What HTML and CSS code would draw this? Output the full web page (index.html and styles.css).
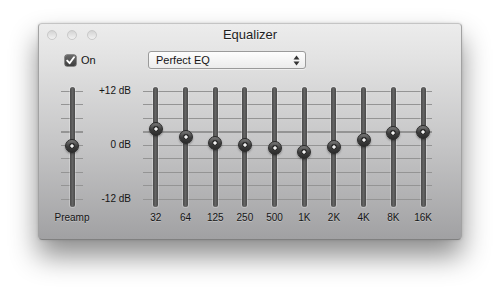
FILE: index.html
```html
<!DOCTYPE html>
<html lang="en">
<head>
    <meta charset="UTF-8">
    <title>Equalizer</title>
    <link rel="stylesheet" href="styles.css">
</head>
<body>
    <div class="window">
        <div class="titlebar">
            <div class="lights"><span></span><span></span><span></span></div>
            <div class="title">Equalizer</div>
        </div>

        <div class="controls">
            <label class="toggle">
                <span class="check">
                    <svg width="9" height="9" viewBox="0 0 9 9"><path d="M1.2 4.6 L3.6 7.2 L8 1.2" fill="none" stroke="#fff" stroke-width="1.9" stroke-linecap="round" stroke-linejoin="round"/></svg>
                </span>
                On
            </label>
            <div class="select">
                <span>Perfect EQ</span>
                <svg class="arrows" width="7" height="11" viewBox="0 0 7 11"><path d="M3.5 0.5 L6.5 4.5 L0.5 4.5 Z M3.5 10.5 L6.5 6.5 L0.5 6.5 Z" fill="#333"/></svg>
            </div>
        </div>

        <div class="sliders">
            <div class="band preamp">
                <div class="slider"><span class="knob" style="top:59px"></span></div>
                <div class="label">Preamp</div>
            </div>

            <div class="scale">
                <span>+12 dB</span>
                <span>0 dB</span>
                <span>-12 dB</span>
            </div>

            <div class="bands">
                <div class="band"><div class="slider"><span class="knob" style="top:42px"></span></div><div class="label">32</div></div>
                <div class="band"><div class="slider"><span class="knob" style="top:50px"></span></div><div class="label">64</div></div>
                <div class="band"><div class="slider"><span class="knob" style="top:56px"></span></div><div class="label">125</div></div>
                <div class="band"><div class="slider"><span class="knob" style="top:58px"></span></div><div class="label">250</div></div>
                <div class="band"><div class="slider"><span class="knob" style="top:61px"></span></div><div class="label">500</div></div>
                <div class="band"><div class="slider"><span class="knob" style="top:65px"></span></div><div class="label">1K</div></div>
                <div class="band"><div class="slider"><span class="knob" style="top:60px"></span></div><div class="label">2K</div></div>
                <div class="band"><div class="slider"><span class="knob" style="top:53px"></span></div><div class="label">4K</div></div>
                <div class="band"><div class="slider"><span class="knob" style="top:46px"></span></div><div class="label">8K</div></div>
                <div class="band"><div class="slider"><span class="knob" style="top:45px"></span></div><div class="label">16K</div></div>
            </div>
        </div>
    </div>
</body>
</html>
```

FILE: styles.css
```css
html {
    background-color: #ffffff;
}
body {
    margin: 0;
    min-height: 293px;
    padding-top: 23px;
    box-sizing: border-box;
    font-family: 'Liberation Sans', Arial, sans-serif;
    color: #151515;
}
.window {
    box-sizing: border-box;
    width: 424px;
    height: 217px;
    margin: 0 auto;
    border: 1px solid #a2a2a2;
    border-top-color: #c4c4c4;
    border-bottom-color: #808080;
    border-radius: 4px;
    background: linear-gradient(#ececec 0%, #e3e3e3 15%, #c6c6c7 55%, #a1a1a3 100%);
    box-shadow: 0 16px 28px rgba(0, 0, 0, 0.45), 0 0 3px rgba(0, 0, 0, 0.15);
}
.titlebar {
    display: grid;
    grid-template-columns: 1fr auto 1fr;
    align-items: center;
    height: 21px;
}
.lights {
    display: flex;
    gap: 10px;
    padding-left: 8px;
}
.lights span {
    width: 10px;
    height: 10px;
    box-sizing: border-box;
    border-radius: 50%;
    border: 1px solid #c9c9c9;
    background: linear-gradient(#d4d4d4, #f2f2f2);
}
.title {
    font-size: 13px;
    color: #1e1e1e;
    text-shadow: 0 1px 0 rgba(255, 255, 255, 0.6);
}
.controls {
    display: flex;
    align-items: center;
    height: 18px;
    margin-top: 6px;
    padding-left: 26px;
}
.toggle {
    display: flex;
    align-items: center;
    gap: 5px;
    width: 83px;
    font-size: 11px;
}
.check {
    display: flex;
    align-items: center;
    justify-content: center;
    width: 11px;
    height: 11px;
    border-radius: 2px;
    background: linear-gradient(#6a6a6a, #3e3e3e);
    box-shadow: 0 0 0 0.5px #333;
}
.select {
    box-sizing: border-box;
    display: flex;
    align-items: center;
    justify-content: space-between;
    width: 158px;
    height: 18px;
    padding: 0 5px 0 7px;
    font-size: 11px;
    border: 1px solid #9a9a9a;
    border-radius: 3px;
    background: linear-gradient(#fdfdfd, #ececec);
    box-shadow: 0 1px 0 rgba(255, 255, 255, 0.5);
}
.sliders {
    display: flex;
    margin-top: 18px;
    padding-left: 13px;
}
.band {
    display: flex;
    flex-direction: column;
    align-items: center;
}
.slider {
    position: relative;
    width: 100%;
    height: 120px;
}
.slider::before {
    content: "";
    position: absolute;
    left: 50%;
    top: 0;
    bottom: 0;
    width: 5px;
    margin-left: -2.5px;
    border-radius: 3px;
    background: linear-gradient(to right, #4a4a4a, #646464, #4a4a4a);
    box-shadow: 0 0 0 1px rgba(255, 255, 255, 0.25);
}
.knob {
    position: absolute;
    left: 50%;
    width: 14px;
    height: 14px;
    margin: -7px 0 0 -7px;
    box-sizing: border-box;
    border-radius: 50%;
    border: 1px solid #2a2a2a;
    background: radial-gradient(circle at 50% 50%, #f2f2f2 0, #f2f2f2 1.4px, #222 1.9px, #3a3a3a 3px, transparent 3.3px),
                linear-gradient(#7a7a7a, #3c3c3c 55%, #2c2c2c);
    box-shadow: 0 1px 2px rgba(0, 0, 0, 0.35);
}
.label {
    margin-top: 4px;
    font-size: 10px;
    line-height: 14px;
    text-shadow: 0 1px 0 rgba(255, 255, 255, 0.3);
}
.preamp {
    width: 40px;
}
.preamp .slider,
.bands {
    background-image: repeating-linear-gradient(to bottom, #949494 0, #949494 1px, transparent 1px, transparent 13.5px);
    background-repeat: no-repeat;
}
.preamp .slider {
    background-size: 22px 109px;
    background-position: 9px 4px;
}
.scale {
    display: flex;
    flex-direction: column;
    justify-content: space-between;
    align-items: flex-end;
    width: 39px;
    height: 120px;
    margin-top: -2px;
    font-size: 10px;
    line-height: 12px;
}
.bands {
    display: grid;
    grid-template-columns: repeat(10, 29.7px);
    margin-left: 10px;
    background-size: 289px 109px;
    background-position: 2px 4px;
}
```
